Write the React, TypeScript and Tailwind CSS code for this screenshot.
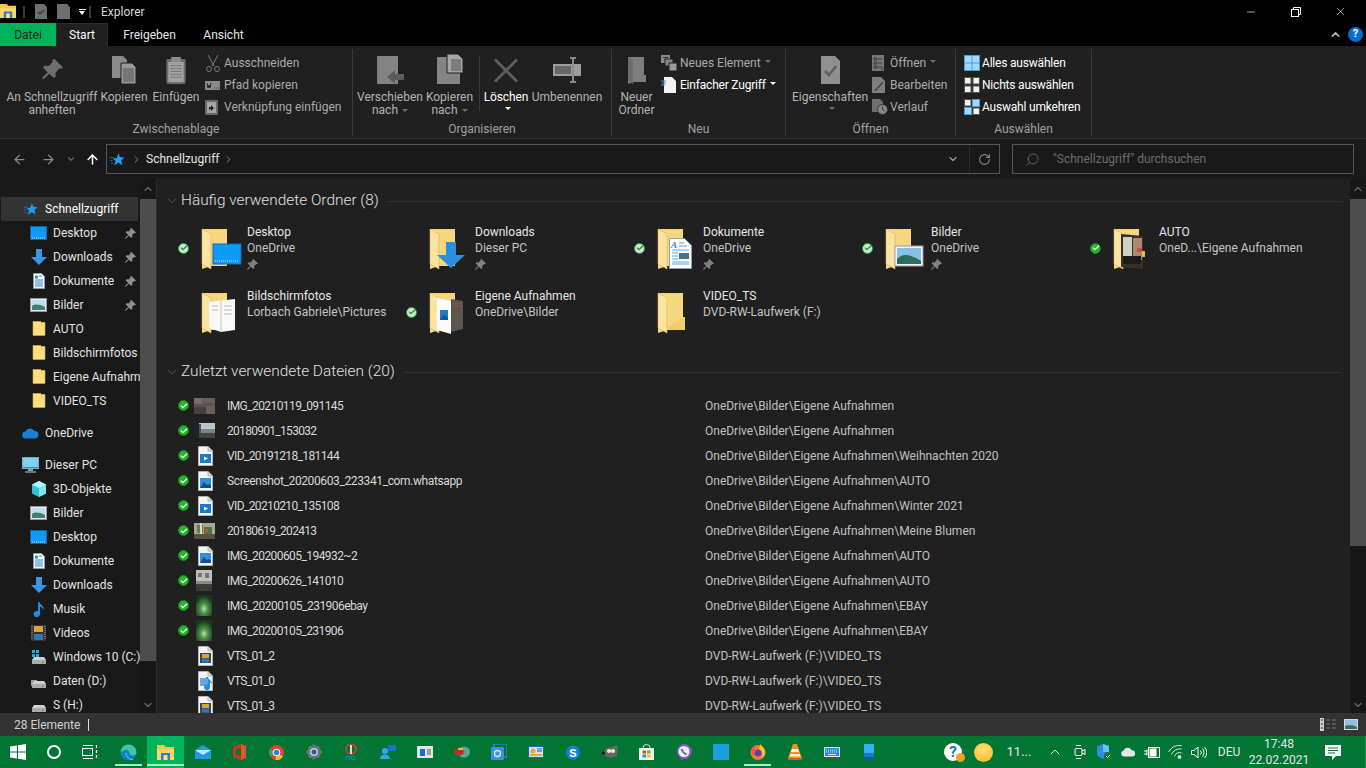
import React from "react";
import { ChevronUp, ChevronDown, ChevronRight, ArrowLeft, ArrowRight, ArrowUp, RotateCw, Search, Minus, X, Check } from "lucide-react";

const F = "font-['Roboto','Liberation_Sans',sans-serif]";

function Star({ s = 16 }: { s?: number }) {
  return <svg width={s} height={s} viewBox="0 0 16 16"><path d="M9 1l1.6 4.4L15.5 6l-3.6 3 1.1 5-4.2-2.7L4.5 14.500l1.400-5L3 7l4.400-.6z" fill="#1e9fee" /><path d="M0 6h4M0 9h2.500M1 12h2.500" stroke="#1e6fb0" strokeWidth="1" /></svg>;
}
function FolderSmall() {
  return <svg width="14" height="16" viewBox="0 0 14 16"><path d="M1 0.500h8v1h4v13H1z" fill="#fcdf80" stroke="#d9b44f" strokeWidth=".6" /><path d="M9 1v3h4" fill="none" stroke="#e8c862" strokeWidth=".6" /></svg>;
}
function DesktopSmall() {
  return <svg width="17" height="14" viewBox="0 0 17 14"><rect x=".5" y=".5" width="16" height="13" fill="#0f9bf5" stroke="#0a64b0" /><path d="M2 12h13" stroke="#bfe4ff" strokeDasharray="1 1" /></svg>;
}
function DownSmall() {
  return <svg width="16" height="16" viewBox="0 0 16 16"><path d="M5 0h6v8h5l-8 8-8-8h5z" fill="#3a96e6" /></svg>;
}
function DocSmall() {
  return <svg width="12" height="16" viewBox="0 0 12 16"><path d="M.5.500h8l3 3v12H.5z" fill="#f5f5f5" stroke="#9a9a9a" /><path d="M2 7h8M2 9h8M2 11h8M2 13h8M6 3h3" stroke="#2f8fd8" /><rect x="2" y="2.500" width="3" height="3" fill="#2f8fd8" /></svg>;
}
function PicSmall() {
  return <svg width="17" height="14" viewBox="0 0 17 14"><rect x=".5" y=".5" width="16" height="13" fill="#e8e8e8" stroke="#999" /><rect x="2" y="2" width="13" height="10" fill="#bcdcf0" /><path d="M2 8c3-2 6-2 13 1v3H2z" fill="#3f7f6c" /></svg>;
}
function Cloud() {
  return <svg width="17" height="12" viewBox="0 0 17 12"><path d="M4 11.500a3.500 3.500 0 0 1-.5-7A5 5 0 0 1 12.500 4a3.700 3.700 0 0 1 .5 7.500z" fill="#1a7fd6" /></svg>;
}
function Monitor() {
  return <svg width="17" height="16" viewBox="0 0 17 16"><rect x=".5" y=".5" width="16" height="11" fill="#7fd0f7" stroke="#8aa" /><path d="M1 10.500h15" stroke="#2f8fd0" /><path d="M6 12h5v2H6z" fill="#99a" /><path d="M3 15h11" stroke="#ccc" /></svg>;
}
function Cube() {
  return <svg width="16" height="16" viewBox="0 0 16 16"><path d="M8 0l7 3.500v9L8 16l-7-3.500v-9z" fill="#35c3dc" /><path d="M8 7l7-3.500v9L8 16z" fill="#7fe3ef" /><path d="M8 0l7 3.500L8 7 1 3.500z" fill="#b6f2f7" /></svg>;
}
function Music() {
  return <svg width="12" height="17" viewBox="0 0 12 17"><path d="M5 1h1.500c.5 3 5 3.500 4 8-.5-2-2-3-3.500-3.500V13a3.200 3 0 1 1-2-2.700z" fill="#1d8fe8" /></svg>;
}
function Film() {
  return <svg width="15" height="16" viewBox="0 0 15 16"><rect width="15" height="16" fill="#333" /><rect x="3" y="1" width="9" height="6" fill="#d9a33c" /><rect x="3" y="9" width="9" height="6" fill="#2e78b8" /><path d="M1 1v14M14 1v14" stroke="#aaa" strokeDasharray="1 1" /></svg>;
}
function Drive({ win, pic }: { win?: boolean; pic?: boolean }) {
  return (
    <svg width="16" height="16" viewBox="0 0 16 16">
      {win && <g fill="#27a5e8"><rect x="1" y="1" width="3" height="3" /><rect x="5" y="1" width="3" height="3" /><rect x="1" y="5" width="3" height="3" /><rect x="5" y="5" width="3" height="3" /></g>}
      {pic && <g><rect x="0" y="7" width="6" height="6" fill="#8aa" /><rect x="2" y="8" width="4" height="3" fill="#6a7" /></g>}
      <path d="M3 8h10l2 3v4H1v-4z" fill="#d0d0d0" /><rect x="1" y="11" width="14" height="4" fill="#aaa" /><rect x="11" y="12.500" width="2" height="1.500" fill="#27c93f" />
    </svg>
  );
}
function MiniPin({ c = "#8a8f94" }: { c?: string }) {
  return <svg width="11" height="11" viewBox="0 0 11 11"><path d="M6.500 0L11 4.500l-1 .8-.7-.4-2.100 2.200.1 2-1 .9L3.800 7.700.8 10.800 0 10l3.100-3L.600 4.300l.9-1 2 .1 2.200-2.100-.4-.7z" fill={c} /></svg>;
}
function Tick({ pale }: { pale?: boolean }) {
  return (
    <span className={`flex h-[11px] w-[11px] items-center justify-center rounded-full border ${pale ? "border-[#1f9e3a] bg-[#cfe6d2]" : "border-[#14861c] bg-[#27b52c]"}`}>
      <Check size={8} strokeWidth={3.500} color={pale ? "#1b7f34" : "#ffffff"} />
    </span>
  );
}

function BigFolder({ children, plain }: { children?: React.ReactNode; plain?: boolean }) {
  return (
    <svg width="44" height="44" viewBox="0 0 44 44">
      <path d="M3 3h25v37H12l-9 3z" fill="#f6d67f" />
      <path d="M3 3l9 5v35l-9-5z" fill="#fbe49f" />
      <path d="M3 3l9 5v35l-9-5z" fill="none" stroke="#d8b45c" strokeWidth=".6" />
      {plain && <path d="M28 27h2v13H12v-2z" fill="#f0cc6c" />}
      {children}
    </svg>
  );
}

function FolderDesktop() {
  return <BigFolder><rect x="14" y="18" width="28" height="20" fill="#0f9bf5" stroke="#0b6ab8" /><path d="M16 35h24" stroke="#cfeaff" strokeDasharray="1 1" /></BigFolder>;
}
function FolderDown() {
  return <BigFolder><path d="M19 16h10v13h9L24 42 10 29h9z" fill="#2e8fe0" /></BigFolder>;
}
function FolderDocs() {
  return <BigFolder><path d="M14.500 12.500h15l7 7v23h-22z" fill="#fbfbfb" stroke="#9aa0a6" /><text x="16" y="22" fontSize="9" fontStyle="italic" fontWeight="700" fill="#2b83d8" fontFamily="Liberation Serif, serif">A</text><path d="M24 17h5M24 20h8M17 24h17M17 27h6M17 30h6M17 33h6M17 36h17M17 38h17" stroke="#5aa8e0" /><rect x="24" y="27" width="10" height="6" fill="#47718a" /></BigFolder>;
}
function FolderPics() {
  return <BigFolder><rect x="12" y="20" width="28" height="20" fill="#f2f2f2" stroke="#a0a0a0" /><rect x="14" y="22" width="24" height="16" fill="#89bfe6" /><path d="M14 33c6-6 12-5 24 2v3H14z" fill="#2c6b60" /></BigFolder>;
}
function FolderAuto() {
  return <BigFolder><path d="M10 8l22 2v33l-22-2z" fill="#3a3028" /><rect x="12" y="11" width="9" height="24" fill="#cfcfc8" /><rect x="22" y="12" width="9" height="22" fill="#a88b6c" /><rect x="12" y="30" width="18" height="8" fill="#1c1c1c" /><rect x="26" y="22" width="5" height="4" fill="#c94f3a" /><rect x="31" y="25" width="3" height="6" fill="#e8bc40" /></BigFolder>;
}
function FolderShots() {
  return <BigFolder><path d="M10 12l26-3v31l-14 2-12-4z" fill="#f8f8f8" /><path d="M22 11v31" stroke="#c5c5c5" /><path d="M13 16h6M13 20h6M25 16h8M25 20h8M25 24h8" stroke="#bbb" /></BigFolder>;
}
function FolderOwn() {
  return <BigFolder><path d="M10 8l14 3v33l-14-4z" fill="#fbfbfb" /><path d="M24 9l12 2v28l-12 3z" fill="#5d5550" /><rect x="13" y="20" width="8" height="10" fill="#1d7cc9" /><path d="M13 30l4-5 4 3v2z" fill="#0f5a97" /><path d="M26 13h8M26 16h8" stroke="#8b5a4a" /></BigFolder>;
}

function PageIcon({ children }: { children: React.ReactNode }) {
  return (
    <svg width="15" height="20" viewBox="0 0 15 20">
      <path d="M.5.500h9.500l4.500 4.500v14.500H.5z" fill="#f4f4f4" stroke="#b5b5b5" />
      <path d="M10 .5v4.500h4.500" fill="#d8d8d8" stroke="#b5b5b5" />
      {children}
    </svg>
  );
}
const VideoPage = () => <PageIcon><rect x="2" y="8" width="11" height="9" fill="#1a78c8" /><path d="M6 10.500l4 2-4 2z" fill="#ffffff" /></PageIcon>;
const ImagePage = () => <PageIcon><rect x="2" y="7" width="11" height="10" fill="#2f8fdb" /><path d="M2 17l4-6 3 3 2-1 2 2v2z" fill="#0f4f96" /></PageIcon>;
const FilmPage = () => <PageIcon><rect x="2" y="7" width="11" height="10" fill="#3f454b" /><rect x="4" y="8" width="7" height="4" fill="#d9a33c" /><rect x="4" y="12.500" width="7" height="4" fill="#2e78b8" /></PageIcon>;
const MediaPage = () => <PageIcon><rect x="2" y="7" width="8" height="8" fill="#6aa4d8" /><path d="M8 6h2c0 3 4 3 4 7l-2-2v5a3 3 0 1 1-2-2.600V9z" fill="#1d8fe8" /></PageIcon>;

const T1 = () => <svg width="21" height="16" viewBox="0 0 21 16"><rect width="21" height="16" fill="#5c524e" /><rect width="8" height="6" fill="#7b6d66" /><rect x="8" width="13" height="5" fill="#66605c" /><rect y="9" width="12" height="7" fill="#4a4040" /><rect x="12" y="8" width="9" height="8" fill="#6c5f5a" /></svg>;
const T2 = () => <svg width="21" height="15" viewBox="0 0 21 15"><rect width="21" height="15" fill="#b9c6cc" /><rect y="6" width="21" height="4" fill="#78868a" /><rect y="10" width="21" height="5" fill="#3d4649" /><rect width="5" height="15" fill="#1f2628" /><rect x="5" y="1" width="2" height="9" fill="#4a5558" /></svg>;
const T3 = () => <svg width="21" height="16" viewBox="0 0 21 16"><rect width="21" height="16" fill="#a8a697" /><rect x="3" y="2" width="6" height="8" fill="#6a7a4a" /><rect x="10" y="4" width="8" height="9" fill="#54703d" /><rect x="11" y="6" width="3" height="3" fill="#c05a3a" /><rect y="11" width="21" height="5" fill="#5a5040" /><rect x="6" y="0" width="2" height="11" fill="#d8d8ce" /></svg>;
const T4 = () => <svg width="16" height="21" viewBox="0 0 16 21"><rect width="16" height="21" fill="#c0bfb7" /><rect x="2" y="3" width="4" height="4" fill="#77756e" /><rect x="9" y="3" width="4" height="5" fill="#77756e" /><rect y="11" width="16" height="3" fill="#8c8b84" /><rect y="14" width="16" height="7" fill="#3b3b37" /></svg>;
const Green = () => (
  <svg width="16" height="21" viewBox="0 0 16 21">
    <defs><radialGradient id="gg" cx=".5" cy=".65" r=".6"><stop offset="0" stopColor="#b9e0b0" /><stop offset=".4" stopColor="#4f8f4a" /><stop offset="1" stopColor="#163a1c" /></radialGradient></defs>
    <rect width="16" height="21" fill="url(#gg)" />
  </svg>
);

/* ribbon icons */
const IconPin = () => <svg width="21" height="21" viewBox="0 0 22 22" className="mb-[4px]"><path d="M13 0l9 9-2 1.600-1.500-.8-4.400 4.500.3 4-2 1.700L7.500 15.500 1.500 21.500 0 20l6-6L1 9l1.800-2 4 .3 4.500-4.500-.8-1.500z" fill="#6f6f6f" /></svg>;
const IconCopy = () => <svg width="24" height="28" viewBox="0 0 24 28"><path d="M0 0h11l4 4v18H0z" fill="#8b8b8b" /><path d="M9 7h11l4 4v17H9z" fill="#9a9a9a" stroke="#202020" /><path d="M11 13h11M11 15h11M11 17h11M11 19h11M11 21h11M11 23h11M11 25h11" stroke="#555" /></svg>;
const IconPaste = () => <svg width="20" height="28" viewBox="0 0 20 29"><rect y="3" width="20" height="26" rx="1.500" fill="#6a6a6a" /><rect x="2" y="6" width="16" height="21" fill="#a3a3a3" /><rect x="5" y="1" width="10" height="5" fill="#8c8c8c" /><path d="M4 10h12M4 13h12M4 16h12M4 19h12M4 22h12" stroke="#777" /></svg>;
const IconScissors = () => <svg width="16" height="17" viewBox="0 0 16 17" fill="none" stroke="#7a7a7a"><path d="M3 0l6 11M13 0L7 11" /><circle cx="4" cy="14" r="2.500" /><circle cx="12" cy="14" r="2.500" /></svg>;
const IconPath = () => <svg width="15" height="9" viewBox="0 0 15 9"><rect width="15" height="9" fill="#8a8a8a" /><path d="M2 2l1 5 1-3 1 3 1-5M9 7h.8M11 7h.8M13 7h.8" stroke="#222" fill="none" /></svg>;
const IconLink = () => <svg width="13" height="16" viewBox="0 0 13 16"><rect y="1" width="13" height="15" rx="1" fill="#6a6a6a" /><rect x="2" y="3" width="9" height="11" fill="#a5a5a5" /><path d="M4 12V8h2V6l3 3-3 3v-2H5z" fill="#222" /></svg>;
const IconMove = () => <svg width="27" height="28" viewBox="0 0 27 28"><path d="M0 0h21v28H0z" fill="#848484" /><path d="M0 0l0 28" stroke="#6f6f6f" /><path d="M10 21l8-7v4h9v6h-9v4z" fill="#5c5c5c" /></svg>;
const IconCopyTo = () => <svg width="26" height="30" viewBox="0 0 26 30"><path d="M0 3h23v27H0z" fill="#848484" /><path d="M10 0h11l5 5v14H10z" fill="#a7a7a7" stroke="#202020" /><path d="M14 6h10M14 8h10M14 10h10M14 12h10M14 14h10M14 16h10" stroke="#555" /></svg>;
const IconDelete = () => <svg width="24" height="25" viewBox="0 0 24 24" className="mb-[1px]"><path d="M2 0l10 10L22 0l2 2-10 10 10 10-2 2-10-10L2 24l-2-2 10-10L0 2z" fill="#5e5e5e" /></svg>;
const IconRename = () => <svg width="28" height="26" viewBox="0 0 28 26" className="mb-[1px]"><rect y="7" width="28" height="12" fill="#9c9c9c" /><rect x="2" y="9" width="16" height="8" fill="#666" /><path d="M17 1h6M20 1v24M17 25h6" stroke="#8a8a8a" strokeWidth="2" fill="none" /></svg>;
const IconNewFolder = () => <svg width="18" height="28" viewBox="0 0 18 28"><path d="M0 1h16v18h2v7H6l-6 2z" fill="#7e7e7e" /><path d="M0 1l5 3v24l-5-3z" fill="#6d6d6d" /></svg>;
const IconNewItem = () => <svg width="16" height="16" viewBox="0 0 16 16"><rect width="9" height="8" fill="#8a8a8a" /><rect x="2" y="2" width="5" height="1" fill="#333" /><rect x="4" y="4" width="8" height="7" fill="#8a8a8a" stroke="#202020" /><rect x="8" y="8" width="8" height="8" fill="#9a9a9a" stroke="#202020" /></svg>;
const IconEasy = () => <svg width="15" height="16" viewBox="0 0 15 16"><path d="M3 0h8l4 4v12H3z" fill="#f2f2f2" /><path d="M0 4h5M1 6h4M0 8h4" stroke="#3a96e6" /></svg>;
const IconProps = () => <svg width="19" height="28" viewBox="0 0 19 28"><path d="M0 0h14l5 5v23H0z" fill="#8f8f8f" /><path d="M4 15l4 4 7-9" stroke="#5f5f5f" strokeWidth="2.500" fill="none" /></svg>;
const IconOpen = () => <svg width="14" height="16" viewBox="0 0 14 16"><rect width="12" height="16" fill="#777" /><path d="M2 3h3v2H2zM2 7h3v2H2zM2 11h3v2H2zM6 4h4M6 8h4M6 12h4" stroke="#3a3a3a" fill="none" /><path d="M9 11l4 3-4 2z" fill="#555" /></svg>;
const IconEdit = () => <svg width="14" height="16" viewBox="0 0 14 16"><path d="M0 0h9l4 4v12H0z" fill="#7e7e7e" /><path d="M3 14l8-9" stroke="#444" strokeWidth="1.500" /></svg>;
const IconHist = () => <svg width="16" height="16" viewBox="0 0 16 16"><path d="M0 0h8l3 3v10H0z" fill="#707070" /><circle cx="10.500" cy="10.500" r="5" fill="#888" stroke="#333" /><path d="M10.500 7.500v3l2 1" stroke="#333" fill="none" /></svg>;
const IconAll = () => <svg width="16" height="16" viewBox="0 0 16 16"><rect width="16" height="16" fill="#3e9fe8" /><rect x="1" y="1" width="6.500" height="6.500" fill="#a4d7fa" /><rect x="8.500" y="1" width="6.500" height="6.500" fill="#a4d7fa" /><rect x="1" y="8.500" width="6.500" height="6.500" fill="#a4d7fa" /><rect x="8.500" y="8.500" width="6.500" height="6.500" fill="#a4d7fa" /></svg>;
const IconNone = () => <svg width="16" height="16" viewBox="0 0 16 16"><rect x=".5" y=".5" width="6.500" height="6.500" fill="#f0f0f0" stroke="#555" /><rect x="9" y=".5" width="6.500" height="6.500" fill="#f0f0f0" stroke="#555" /><rect x=".5" y="9" width="6.500" height="6.500" fill="#f0f0f0" stroke="#555" /><rect x="9" y="9" width="6.500" height="6.500" fill="#f0f0f0" stroke="#555" /></svg>;
const IconInvert = () => <svg width="16" height="16" viewBox="0 0 16 16"><rect x=".5" y=".5" width="6.500" height="6.500" fill="#f0f0f0" stroke="#555" /><rect x="8" width="8" height="8" fill="#3e9fe8" /><rect x="9" y="1" width="6" height="6" fill="#a4d7fa" /><rect y="8" width="8" height="8" fill="#3e9fe8" /><rect x="1" y="9" width="6" height="6" fill="#a4d7fa" /><rect x="9" y="9" width="6.500" height="6.500" fill="#f0f0f0" stroke="#555" /></svg>;

const Caret = ({ white }: { white?: boolean }) => <span className={`ml-1 inline-block h-0 w-0 translate-y-[-2px] border-x-[3.5px] border-t-[3.5px] border-x-transparent ${white ? "border-t-white" : "border-t-[#6f6f6f]"}`} />;

function Large({ w, icon, lines, bright, caret, caretOwn }: { w: string; icon: React.ReactNode; lines: React.ReactNode[]; bright?: boolean; caret?: boolean; caretOwn?: "white" | "gray" }) {
  return (
    <div className={`flex shrink-0 flex-col items-center ${w}`}>
      <div className="flex h-[42px] items-end justify-center pb-[7px]">{icon}</div>
      <div className={`flex flex-col items-center text-xs leading-[13px] ${bright ? "tracking-[-0.1px] text-white" : "text-[#b4b4b4]"}`}>
        {lines.map((l, i) => <div key={i} className="whitespace-nowrap">{l}{caret && i === lines.length - 1 && <Caret />}</div>)}
        {caretOwn && <div className="flex h-[13px] items-center"><Caret white={caretOwn === "white"} /></div>}
      </div>
    </div>
  );
}
function Small({ icon, label, iconW, bright, caret }: { icon: React.ReactNode; label: string; iconW: string; bright?: boolean; caret?: "white" | "gray" }) {
  return (
    <div className={`flex h-[22px] items-center whitespace-nowrap text-xs ${bright ? "tracking-[-0.2px] text-white" : "text-[#ababab]"}`}>
      <span className={`flex shrink-0 items-center ${iconW}`}>{icon}</span>
      <span>{label}</span>
      {caret && <Caret white={caret === "white"} />}
    </div>
  );
}
function Group({ w, label, children }: { w: string; label: string; children: React.ReactNode }) {
  return (
    <div className={`flex shrink-0 flex-col border-r border-[#3a3a3a] ${w}`}>
      <div className="flex h-[72px] items-start">{children}</div>
      <div className="mt-[1px] flex h-[14px] items-center justify-center text-xs text-[#a0a0a0]">{label}</div>
    </div>
  );
}

function NavRow({ icon, label, pin, top, sel }: { icon: React.ReactNode; label: string; pin?: boolean; top?: boolean; sel?: boolean }) {
  return (
    <div className={`flex h-6 shrink-0 items-center text-xs ${top ? "pl-[24px]" : "pl-[32px]"} ${sel ? "ml-[1px] mr-[2px] bg-[#333333] text-white" : "text-[#e2e2e2]"}`}>
      <span className={`flex w-[21px] shrink-0 items-center justify-center ${sel ? "-ml-[1px]" : ""}`}>{icon}</span>
      <span className="min-w-0 flex-1 overflow-hidden whitespace-nowrap">{label}</span>
      {pin && <span className="mr-[4px] shrink-0"><MiniPin /></span>}
    </div>
  );
}

const iconWrapNav = (n: React.ReactNode) => <span className="-ml-[8px] flex w-[21px] justify-center">{n}</span>;

function FolderCell({ icon, name, sub, tick, pin }: { icon: React.ReactNode; name: string; sub: string; tick?: "pale" | "solid"; pin?: boolean }) {
  return (
    <div className="flex h-16 items-center">
      <span className="flex w-[21px] shrink-0 items-center justify-center">{tick && <Tick pale={tick === "pale"} />}</span>
      <span className="flex w-[53px] shrink-0 items-center justify-start pl-[5px]">{icon}</span>
      <div className="flex h-12 flex-col whitespace-nowrap text-xs leading-4 text-[#e6e6e6]">
        <span>{name}</span>
        <span className="text-[#c4c4c4]">{sub}</span>
        <span className="flex h-4 items-center">{pin && <MiniPin c="#7c8287" />}</span>
      </div>
    </div>
  );
}

function FileRow({ icon, name, path, tick, ts }: { icon: React.ReactNode; name: string; path: string; tick?: boolean; ts: string }) {
  return (
    <div className="flex h-[25px] shrink-0 items-center whitespace-nowrap text-xs text-[#d8d8d8]">
      <span className="flex w-[21px] shrink-0 items-center justify-center">{tick && <Tick />}</span>
      <span className="flex w-[33px] shrink-0 items-center justify-start">{icon}</span>
      <span className={`w-[478px] shrink-0 ${ts}`}>{name}</span>
      <span className="text-[#c0c0c0]">{path}</span>
    </div>
  );
}

function SectionHead({ label, mb }: { label: string; mb: string }) {
  return (
    <div className={`-ml-[9px] flex h-5 items-center ${mb}`}>
      <span className="flex w-[15px] justify-center"><ChevronDown size={14} strokeWidth={1} color="#777" /></span>
      <span className="whitespace-nowrap pl-[2px] text-[15.4px] font-light text-[#e2e2e2]">{label}</span>
      <span className="ml-2 h-px flex-1 bg-[#2e2e2e]" />
    </div>
  );
}

function ScrollBar({ w, thumb }: { w: string; thumb: string }) {
  return (
    <div className={`flex shrink-0 flex-col items-center bg-[#171717] ${w}`}>
      <div className="flex h-5 items-center"><ChevronUp size={12} strokeWidth={2.500} color="#666" /></div>
      <div className={`w-full bg-[#4d4d4d] ${thumb}`} />
      <div className="flex-1" />
      <div className="flex h-[17px] items-center"><ChevronDown size={12} strokeWidth={2.500} color="#666" /></div>
    </div>
  );
}

/* taskbar */
const TB = ({ children, active, line }: { children: React.ReactNode; active?: boolean; line?: boolean }) => (
  <div className={`relative flex h-8 w-[37px] shrink-0 items-center justify-center ${active ? "bg-[#00b25a]" : ""}`}>
    {children}
    {line && <span className={`absolute bottom-[2px] h-[2px] bg-[#9ff5c8] ${active ? "inset-x-0" : "inset-x-[5px]"}`} />}
  </div>
);
const Tray = ({ w, children }: { w: string; children: React.ReactNode }) => <div className={`flex h-8 shrink-0 items-center justify-center ${w}`}>{children}</div>;

const Explorer = ({ s = 17 }: { s?: number }) => <svg width={s} height={s} viewBox="0 0 17 17"><path d="M0 1h7l2 2h8v13H0z" fill="#f6c648" /><rect y="5" width="17" height="11" fill="#fcd765" /><rect x="4" y="9" width="9" height="7" fill="#3a78c8" /><rect x="6.500" y="11" width="4" height="5" fill="#fce38a" /></svg>;

export default function App() {
  return (
    <div className={`flex h-screen w-[1366px] flex-col overflow-hidden bg-black ${F}`}>
      {/* title bar */}
      <div className="flex h-[23px] shrink-0 items-center bg-black text-xs text-[#d8d8d8]">
        <span className="-mt-[1px] flex w-[23px] items-center pr-[6px]"><Explorer s={16} /></span>
        <span className="h-[12px] w-[2px] bg-[#3a3a3a]" />
        <span className="ml-[10px] flex w-[12px] items-center"><svg width="12" height="15" viewBox="0 0 12 15"><path d="M0 0h9l3 3v12H0z" fill="#6f6f6f" /><path d="M3 8l2 2 4-4" stroke="#333" strokeWidth="1.200" fill="none" /></svg></span>
        <span className="ml-[10px] flex w-[13px] items-center"><svg width="13" height="15" viewBox="0 0 13 15"><path d="M0 0h10l3 3v12H0z" fill="#6f6f6f" /></svg></span>
        <span className="ml-[8px] flex w-[8px] flex-col items-center"><span className="mb-[1px] h-px w-[7px] bg-white" /><span className="h-0 w-0 border-x-[3.500px] border-t-[4px] border-x-transparent border-t-white" /></span>
        <span className="ml-[3px] h-[12px] w-[2px] bg-[#3a3a3a]" />
        <span className="ml-[10px] text-[#d8d8d8]">Explorer</span>
        <div className="ml-auto flex h-full items-center pr-[2px]">
          <span className="flex w-[45px] justify-center"><Minus size={12} strokeWidth={1.300} color="#fff" /></span>
          <span className="flex w-[45px] justify-center">
            <svg width="10" height="10" viewBox="0 0 10 10" fill="none" stroke="#fff"><rect x=".5" y="2.500" width="7" height="7" /><path d="M2.500 2.500v-2h7v7h-2" /></svg>
          </span>
          <span className="flex w-[46px] justify-center pr-[2px]"><X size={13} strokeWidth={1.100} color="#fff" /></span>
        </div>
      </div>
      {/* tabs */}
      <div className="flex h-[23px] shrink-0 items-stretch text-xs text-[#e6e6e6]">
        <div className="flex w-14 items-center justify-center bg-[#00b25a] text-[#0f2a1a]">Datei</div>
        <div className="flex w-[52px] items-center justify-center border-x border-t border-[#2d2d2d] bg-[#202020] text-white">Start</div>
        <div className="flex w-[82px] items-center justify-center pl-[1px]">Freigeben</div>
        <div className="flex w-[66px] items-center justify-center pl-[1px]">Ansicht</div>
        <div className="ml-auto flex items-center">
          <ChevronUp size={13} strokeWidth={3} color="#b5b5b5" />
          <span className="ml-[6px] mr-[3px] flex h-[15px] w-[15px] items-center justify-center rounded-full bg-[#0a6ed0] text-[11px] font-bold text-white">?</span>
        </div>
      </div>
      {/* ribbon */}
      <div className="flex h-[93px] shrink-0 items-start border-b border-[#2f2f2f] bg-[#202020] pt-[3px]">
        <Group w="w-[353px]" label="Zwischenablage">
          <div className="w-[6px]" />
          <Large w="w-[92px]" icon={<IconPin />} lines={["An Schnellzugriff", "anheften"]} />
          <Large w="w-[52px]" icon={<IconCopy />} lines={["Kopieren"]} />
          <Large w="w-[52px]" icon={<IconPaste />} lines={["Einfügen"]} />
          <div className="ml-[3px] flex flex-col pt-[3px]">
            <Small iconW="w-[19px]" icon={<IconScissors />} label="Ausschneiden" />
            <Small iconW="w-[19px]" icon={<IconPath />} label="Pfad kopieren" />
            <Small iconW="w-[19px]" icon={<IconLink />} label="Verknüpfung einfügen" />
          </div>
        </Group>
        <Group w="w-[259px]" label="Organisieren">
          <div className="w-[6px]" />
          <Large w="w-[62px]" icon={<IconMove />} lines={["Verschieben", "nach"]} caret />
          <Large w="w-[57px]" icon={<IconCopyTo />} lines={["Kopieren", "nach"]} caret />
          <div className="ml-[1px] mt-[7px] h-[55px] w-px bg-[#3a3a3a]" />
          <Large w="w-[52px]" icon={<IconDelete />} lines={["Löschen"]} bright caretOwn="white" />
          <Large w="w-[70px]" icon={<IconRename />} lines={["Umbenennen"]} />
        </Group>
        <Group w="w-[174px]" label="Neu">
          <div className="w-[1px]" />
          <Large w="w-[47px]" icon={<IconNewFolder />} lines={["Neuer", "Ordner"]} />
          <div className="flex flex-col pl-[1px] pt-[3px]">
            <Small iconW="w-[19px]" icon={<IconNewItem />} label="Neues Element" caret="gray" />
            <Small iconW="w-[19px]" icon={<IconEasy />} label="Einfacher Zugriff" bright caret="white" />
          </div>
        </Group>
        <Group w="w-[170px]" label="Öffnen">
          <div className="w-[6px]" />
          <Large w="w-[76px]" icon={<IconProps />} lines={["Eigenschaften"]} caretOwn="gray" />
          <div className="ml-[4px] flex flex-col pt-[3px]">
            <Small iconW="w-[18px]" icon={<IconOpen />} label="Öffnen" caret="gray" />
            <Small iconW="w-[18px]" icon={<IconEdit />} label="Bearbeiten" />
            <Small iconW="w-[18px]" icon={<IconHist />} label="Verlauf" />
          </div>
        </Group>
        <Group w="w-[136px]" label="Auswählen">
          <div className="ml-[8px] flex flex-col pt-[3px]">
            <Small iconW="w-[18px]" icon={<IconAll />} label="Alles auswählen" bright />
            <Small iconW="w-[18px]" icon={<IconNone />} label="Nichts auswählen" bright />
            <Small iconW="w-[18px]" icon={<IconInvert />} label="Auswahl umkehren" bright />
          </div>
        </Group>
      </div>
      {/* nav bar */}
      <div className="flex h-[40px] shrink-0 items-center bg-[#191919] text-xs">
        <div className="flex w-[106px] shrink-0 items-center">
          <span className="flex w-[38px] justify-center pl-[1px]"><ArrowLeft size={15} strokeWidth={2} color="#8a8a8a" /></span>
          <span className="-ml-[1px] flex w-[22px] justify-center"><ArrowRight size={15} strokeWidth={2} color="#8a8a8a" /></span>
          <span className="flex w-[24px] justify-center"><ChevronDown size={10} strokeWidth={3} color="#666" /></span>
          <span className="flex w-[18px] justify-center"><ArrowUp size={15} strokeWidth={2.500} color="#fff" /></span>
        </div>
        <div className="flex h-[30px] w-[894px] items-center border border-[#555] text-[#e6e6e6]">
          <span className="ml-[2px] flex w-[16px] justify-center"><Star s={15} /></span>
          <ChevronRight size={11} strokeWidth={2} color="#8a8a8a" className="ml-[6px]" />
          <span className="ml-[4px]">Schnellzugriff</span>
          <ChevronRight size={11} strokeWidth={2} color="#8a8a8a" className="ml-[4px]" />
          <span className="ml-auto flex w-[32px] justify-center"><ChevronDown size={12} strokeWidth={2.500} color="#999" /></span>
          <span className="flex h-full w-[30px] items-center justify-center border-l border-[#2c2c2c]"><RotateCw size={13} strokeWidth={2} color="#8a8a8a" /></span>
        </div>
        <div className="ml-[12px] flex h-[30px] w-[342px] items-center border border-[#555] text-[#6e6e6e]">
          <span className="ml-[12px] flex w-[15px] justify-center"><Search size={15} strokeWidth={1.200} color="#777" className="scale-x-[-1]" /></span>
          <span className="ml-[13px]">"Schnellzugriff" durchsuchen</span>
        </div>
      </div>
      {/* body */}
      <div className="flex min-h-0 flex-1">
        <div className="flex w-[140px] shrink-0 flex-col overflow-hidden bg-[#191919] pt-[18px]">
          <NavRow sel top icon={iconWrapNav(<Star s={14} />)} label="Schnellzugriff" />
          <NavRow icon={iconWrapNav(<DesktopSmall />)} label="Desktop" pin />
          <NavRow icon={iconWrapNav(<DownSmall />)} label="Downloads" pin />
          <NavRow icon={iconWrapNav(<DocSmall />)} label="Dokumente" pin />
          <NavRow icon={iconWrapNav(<PicSmall />)} label="Bilder" pin />
          <NavRow icon={iconWrapNav(<FolderSmall />)} label="AUTO" />
          <NavRow icon={iconWrapNav(<FolderSmall />)} label="Bildschirmfotos" />
          <NavRow icon={iconWrapNav(<FolderSmall />)} label="Eigene Aufnahmen" />
          <NavRow icon={iconWrapNav(<FolderSmall />)} label="VIDEO_TS" />
          <div className="h-2 shrink-0" />
          <NavRow top icon={iconWrapNav(<Cloud />)} label="OneDrive" />
          <div className="h-2 shrink-0" />
          <NavRow top icon={iconWrapNav(<Monitor />)} label="Dieser PC" />
          <NavRow icon={iconWrapNav(<Cube />)} label="3D-Objekte" />
          <NavRow icon={iconWrapNav(<PicSmall />)} label="Bilder" />
          <NavRow icon={iconWrapNav(<DesktopSmall />)} label="Desktop" />
          <NavRow icon={iconWrapNav(<DocSmall />)} label="Dokumente" />
          <NavRow icon={iconWrapNav(<DownSmall />)} label="Downloads" />
          <NavRow icon={iconWrapNav(<Music />)} label="Musik" />
          <NavRow icon={iconWrapNav(<Film />)} label="Videos" />
          <NavRow icon={iconWrapNav(<Drive win />)} label="Windows 10 (C:)" />
          <NavRow icon={iconWrapNav(<Drive pic />)} label="Daten (D:)" />
          <NavRow icon={iconWrapNav(<Drive />)} label="S (H:)" />
        </div>
        <ScrollBar w="w-[17px] border-r border-[#2b2b2b]" thumb="h-[462px]" />
        <div className="flex min-w-0 flex-1 flex-col overflow-hidden bg-[#202020] pl-[16px] pr-[8px] pt-[12px]">
          <SectionHead label="Häufig verwendete Ordner (8)" mb="mb-[5px]" />
          <div className="grid grid-cols-[repeat(5,228px)] grid-rows-[64px_64px]">
            <FolderCell tick="pale" icon={<FolderDesktop />} name="Desktop" sub="OneDrive" pin />
            <FolderCell icon={<FolderDown />} name="Downloads" sub="Dieser PC" pin />
            <FolderCell tick="pale" icon={<FolderDocs />} name="Dokumente" sub="OneDrive" pin />
            <FolderCell tick="pale" icon={<FolderPics />} name="Bilder" sub="OneDrive" pin />
            <FolderCell tick="solid" icon={<FolderAuto />} name="AUTO" sub="OneD...\Eigene Aufnahmen" />
            <FolderCell icon={<FolderShots />} name="Bildschirmfotos" sub="Lorbach Gabriele\Pictures" />
            <FolderCell tick="pale" icon={<FolderOwn />} name="Eigene Aufnahmen" sub="OneDrive\Bilder" />
            <FolderCell icon={<BigFolder plain />} name="VIDEO_TS" sub="DVD-RW-Laufwerk (F:)" />
          </div>
          <div className="mt-[18px]">
            <SectionHead label="Zuletzt verwendete Dateien (20)" mb="mb-[11px]" />
          </div>
          <FileRow tick ts="tracking-[-0.58px]" icon={<T1 />} name="IMG_20210119_091145" path="OneDrive\Bilder\Eigene Aufnahmen" />
          <FileRow tick ts="tracking-[-0.7px]" icon={<T2 />} name="20180901_153032" path="OneDrive\Bilder\Eigene Aufnahmen" />
          <FileRow tick ts="tracking-[-0.63px]" icon={<span className="pl-[4px]"><VideoPage /></span>} name="VID_20191218_181144" path="OneDrive\Bilder\Eigene Aufnahmen\Weihnachten 2020" />
          <FileRow tick ts="tracking-[-0.38px]" icon={<span className="pl-[4px]"><ImagePage /></span>} name="Screenshot_20200603_223341_com.whatsapp" path="OneDrive\Bilder\Eigene Aufnahmen\AUTO" />
          <FileRow tick ts="tracking-[-0.63px]" icon={<span className="pl-[4px]"><VideoPage /></span>} name="VID_20210210_135108" path="OneDrive\Bilder\Eigene Aufnahmen\Winter 2021" />
          <FileRow tick ts="tracking-[-0.7px]" icon={<T3 />} name="20180619_202413" path="OneDrive\Bilder\Eigene Aufnahmen\Meine Blumen" />
          <FileRow tick ts="tracking-[-0.57px]" icon={<span className="pl-[4px]"><ImagePage /></span>} name="IMG_20200605_194932~2" path="OneDrive\Bilder\Eigene Aufnahmen\AUTO" />
          <FileRow tick ts="tracking-[-0.58px]" icon={<span className="pl-[2px]"><T4 /></span>} name="IMG_20200626_141010" path="OneDrive\Bilder\Eigene Aufnahmen\AUTO" />
          <FileRow tick ts="tracking-[-0.52px]" icon={<span className="pl-[2px]"><Green /></span>} name="IMG_20200105_231906ebay" path="OneDrive\Bilder\Eigene Aufnahmen\EBAY" />
          <FileRow tick ts="tracking-[-0.58px]" icon={<span className="pl-[2px]"><Green /></span>} name="IMG_20200105_231906" path="OneDrive\Bilder\Eigene Aufnahmen\EBAY" />
          <FileRow ts="tracking-[-0.7px]" icon={<span className="pl-[4px]"><FilmPage /></span>} name="VTS_01_2" path="DVD-RW-Laufwerk (F:)\VIDEO_TS" />
          <FileRow ts="tracking-[-0.7px]" icon={<span className="pl-[4px]"><MediaPage /></span>} name="VTS_01_0" path="DVD-RW-Laufwerk (F:)\VIDEO_TS" />
          <FileRow ts="tracking-[-0.7px]" icon={<span className="pl-[4px]"><FilmPage /></span>} name="VTS_01_3" path="DVD-RW-Laufwerk (F:)\VIDEO_TS" />
        </div>
        <ScrollBar w="w-[16px]" thumb="h-[347px]" />
      </div>
      {/* status bar */}
      <div className="flex h-[23px] shrink-0 items-center bg-[#333333] pl-[14px] text-xs text-[#d0d0d0]">
        <span>28 Elemente</span>
        <span className="ml-[8px] h-[12px] w-px bg-[#dddddd]" />
        <div className="ml-auto flex items-center">
          <svg width="16" height="13" viewBox="0 0 16 13"><rect width="4" height="13" fill="#cfcfcf" /><path d="M1 2h2M1 6h2M1 10h2" stroke="#333" /><path d="M6 2h4M12 2h4M6 6h4M12 6h4M6 10h4M12 10h4" stroke="#777" /></svg>
          <svg width="14" height="11" viewBox="0 0 14 11" className="ml-[8px] mr-[8px]"><rect width="14" height="11" fill="#d8d8d8" /><rect x="1" y="1" width="12" height="9" fill="#8fc0dd" /><path d="M1 7c4-2 8-1 12 1v2H1z" fill="#3b6b60" /></svg>
        </div>
      </div>
      {/* taskbar */}
      <div className="flex h-8 shrink-0 items-center bg-[#017534] text-white">
        <Tray w="w-9"><svg width="16" height="16" viewBox="0 0 16 16" fill="#fff"><path d="M0 2.500l7-1v6H0zM8 1.300L16 0v7.500H8zM0 8.500h7v6l-7-1zM8 8.500h8V16l-8-1.200z" /></svg></Tray>
        <Tray w="w-9"><span className="h-[14px] w-[14px] rounded-full border-2 border-white" /></Tray>
        <Tray w="w-9"><svg width="16" height="14" viewBox="0 0 16 14" fill="none" stroke="#fff"><rect x=".5" y="3.500" width="10" height="7" /><path d="M1 .5h10M1 13.500h10M14.500 0v3M14.500 5v3M14.500 10v3" strokeWidth="1.200" /></svg></Tray>
        <div className="w-[2px]" />
        <TB line><svg width="17" height="17" viewBox="0 0 17 17"><circle cx="8.500" cy="8.500" r="8" fill="#0f7fc8" /><path d="M.5 8.500a8 8 0 0 1 16 0c0 2-2 3-4 3-2.500 0-3-1.500-3-2.500 0-1.500-1-3-3-3-3 0-5 2-6 2.500z" fill="#3fc8a0" /><path d="M6 9c0 4 4 7 7 6.500" stroke="#6fd8f0" fill="none" /></svg></TB>
        <TB active line><Explorer /></TB>
        <TB><svg width="16" height="14" viewBox="0 0 16 14"><path d="M0 5l8-5 8 5v9H0z" fill="#1e9be0" /><path d="M0 5l8 5 8-5" fill="#bfe6fa" /></svg></TB>
        <TB><svg width="13" height="16" viewBox="0 0 13 16"><path d="M0 3l8-3v16l-8-3z" fill="#c8381f" /><path d="M8 0l5 2v12l-5 2z" fill="#e8552a" /><rect x="3" y="5" width="5" height="6" fill="#017534" /></svg></TB>
        <TB><svg width="15" height="15" viewBox="0 0 16 16"><circle cx="8" cy="8" r="8" fill="#e34133" /><path d="M8 8L15 12A8 8 0 0 1 7 16z" fill="#f5bd19" /><path d="M8 8L1 12A8 8 0 0 1 1 4z" fill="#33a852" /><circle cx="8" cy="8" r="4" fill="#fff" /><circle cx="8" cy="8" r="3" fill="#3b78e7" /></svg></TB>
        <TB><svg width="16" height="16" viewBox="0 0 16 16"><path d="M8 0l2 2h3l1 3 2 3-2 3-1 3h-3l-2 2-2-2H3l-1-3-2-3 2-3 1-3h3z" fill="#6d7377" /><circle cx="8" cy="8" r="4" fill="#c9ccce" /><circle cx="8" cy="8" r="2.500" fill="#1c5fb4" /></svg></TB>
        <TB><svg width="14" height="17" viewBox="0 0 14 17" fill="none"><circle cx="7" cy="5" r="5" stroke="#e03c2a" strokeWidth="1.500" /><path d="M7 1v9" stroke="#ddd" strokeWidth="2" /><circle cx="4" cy="14" r="2" stroke="#2b7bd8" /><circle cx="9" cy="14" r="2" stroke="#2b7bd8" /></svg></TB>
        <TB><svg width="16" height="14" viewBox="0 0 16 14"><rect x="8" width="8" height="6" fill="#1e6fd0" /><circle cx="5" cy="6" r="3" fill="#2ea8f0" /><path d="M0 14c0-6 10-6 10 0z" fill="#2ea8f0" /></svg></TB>
        <TB><svg width="16" height="12" viewBox="0 0 16 12"><rect width="16" height="12" fill="#e4e4e4" /><rect x="3" y="3" width="5" height="7" fill="#1672c8" /><path d="M10 4h4M10 6h4M10 8h4" stroke="#555" /></svg></TB>
        <TB><svg width="16" height="12" viewBox="0 0 16 12"><ellipse cx="10" cy="6" rx="6" ry="5.500" fill="#57a69a" /><ellipse cx="5" cy="6" rx="5" ry="3.500" fill="#bd2f2a" /><path d="M4 2h5v2H4z" fill="#e8b638" /></svg></TB>
        <TB><svg width="16" height="16" viewBox="0 0 16 16"><rect x="3" y="0" width="13" height="13" fill="none" stroke="#3d90e8" /><rect y="3" width="13" height="13" rx="1" fill="#3d90e8" /><circle cx="6.500" cy="9.500" r="3" fill="none" stroke="#d5e9ff" strokeWidth="1.300" /></svg></TB>
        <TB><svg width="16" height="12" viewBox="0 0 16 12"><rect width="16" height="12" fill="#1c5fb4" /><rect x="1" y="1" width="14" height="10" fill="#cfe3f2" /><circle cx="5" cy="5" r="2.500" fill="#e8a33a" /><path d="M9 3h5M9 5h5" stroke="#1c5fb4" /><rect x="2" y="8" width="12" height="2" fill="#e8a33a" /></svg></TB>
        <TB><svg width="14" height="15" viewBox="0 0 14 15"><circle cx="7" cy="7.500" r="7" fill="#0a84cf" /><text x="7" y="11.500" textAnchor="middle" fontSize="11" fontWeight="700" fill="#fff" fontFamily="Liberation Sans, sans-serif">S</text></svg></TB>
        <TB><svg width="16" height="14" viewBox="0 0 16 14"><path d="M2 6c0-3 10-5 14-6l-1 10c-2 3-10 4-13-1z" fill="#6b665c" /><circle cx="7" cy="6" r="2" fill="#eee" /><circle cx="11" cy="6" r="2" fill="#eee" /><circle cx="1.500" cy="8" r="1.500" fill="#111" /></svg></TB>
        <TB><svg width="15" height="16" viewBox="0 0 15 16"><path d="M0 4h15v12H0z" fill="#f5f5f5" /><path d="M4 4a3.500 3.500 0 0 1 7 0" stroke="#ddd" fill="none" /><rect x="3.500" y="6.500" width="3.500" height="3" fill="#e34133" /><rect x="8" y="6.500" width="3.500" height="3" fill="#7ab800" /><rect x="3.500" y="10.500" width="3.500" height="3" fill="#1d8fe8" /><rect x="8" y="10.500" width="3.500" height="3" fill="#f5bd19" /></svg></TB>
        <TB><svg width="16" height="16" viewBox="0 0 16 16"><path d="M8 0a8 7.500 0 0 1 0 15l-3 1v-2A8 7.500 0 0 1 8 0z" fill="#7f5bc4" /><circle cx="8" cy="7.500" r="5.500" fill="#f2f2f2" /><path d="M5.500 5c1 3 2.500 4.500 5 5.500" stroke="#7f5bc4" strokeWidth="2" fill="none" /></svg></TB>
        <TB><span className="h-4 w-4 bg-[#1c9fe0]" /></TB>
        <TB line><svg width="16" height="16" viewBox="0 0 16 16"><circle cx="8" cy="8.500" r="7.500" fill="#f77f2a" /><path d="M11 0c0 3 4 4 4 8a7 7 0 0 1-3 6c2-3 0-8-3-8 0-3 1-5 2-6z" fill="#fcc52d" /><circle cx="8" cy="9" r="3.500" fill="#5f3fb8" /><path d="M1 6c1-2 3-3 5-3-2 2-1 3 1 3-3 1-3 4-1 6-3 0-5-3-5-6z" fill="#ff4a5c" /></svg></TB>
        <TB><svg width="14" height="16" viewBox="0 0 14 16"><path d="M5 0h4l5 14H0z" fill="#f58f1b" /><path d="M4 5h6l1 3H3z" fill="#f5f5f5" /><path d="M2.500 10h9l1 2.500h-11z" fill="#f5f5f5" /><rect y="14" width="14" height="2" fill="#e05a12" /></svg></TB>
        <TB><svg width="16" height="10" viewBox="0 0 16 10"><rect width="16" height="10" fill="#d8e6f0" /><rect x="1" y="1" width="14" height="8" fill="#1f8fe0" /><path d="M2 3h12M2 5h12" stroke="#d8e6f0" strokeDasharray="1 1" /><path d="M4 7.500h8" stroke="#d8e6f0" /></svg></TB>
        <TB><svg width="10" height="16" viewBox="0 0 10 16"><rect width="10" height="16" fill="#2fb2ee" /><rect y="9" width="10" height="4" fill="#1a78c4" /><rect y="13" width="10" height="3" fill="#0f5aa0" /></svg></TB>
        <div className="flex-1" />
        <Tray w="w-[26px]"><span className="relative flex h-[18px] w-[18px] items-center justify-center rounded-full bg-white text-[15px] font-bold text-[#1273c7]">?<span className="absolute -bottom-[1px] -right-[3px] h-[9px] w-[9px] rounded-full bg-[#f2a32b]" /></span></Tray>
        <Tray w="w-[34px]"><span className="h-[19px] w-[19px] rounded-full bg-[radial-gradient(circle_at_50%_35%,#ffe37a,#fdb114)]" /></Tray>
        <Tray w="w-[42px]"><span className="pr-[4px] text-[13px] text-[#e6e6e6]">11...</span></Tray>
        <Tray w="w-[25px]"><ChevronUp size={16} strokeWidth={1.300} color="#fff" /></Tray>
        <Tray w="w-[25px]"><svg width="12" height="16" viewBox="0 0 12 16" fill="none" stroke="#fff"><rect x="1" y="4.500" width="7" height="7" rx="1" /><path d="M8 7l3-1.500v5L8 9M2 1.500h5M2 14.500h5" /></svg></Tray>
        <Tray w="w-[24px]"><svg width="15" height="16" viewBox="0 0 15 16"><path d="M0 2l6-2 6 2v7c0 3-3 5-6 6-3-1-6-3-6-6z" fill="#2a8fe0" /><path d="M6 0l6 2v6H6z" fill="#6dc0f2" /><circle cx="11" cy="12" r="4" fill="#0d7a2c" /><path d="M9 12l1.500 1.500L13 11" stroke="#fff" fill="none" /></svg></Tray>
        <Tray w="w-[23px]"><svg width="16" height="10" viewBox="0 0 17 11"><path d="M4 10.500a3.300 3.300 0 0 1-.5-6.500A5 5 0 0 1 12.500 3.500a3.500 3.500 0 0 1 .5 7z" fill="#e6e6e6" /></svg></Tray>
        <Tray w="w-[25px]"><svg width="16" height="11" viewBox="0 0 16 11" fill="none" stroke="#fff"><rect x="4.500" y=".5" width="11" height="10" /><rect x="6" y="2" width="6" height="7" fill="#fff" /><path d="M0 4h3M0 7h3M3 2.500v6" /></svg></Tray>
        <Tray w="w-[23px]"><svg width="15" height="14" viewBox="0 0 15 14" fill="none" stroke="#ddd"><path d="M.5 7a13 13 0 0 1 13-6.500M3.500 9.500a9 9 0 0 1 10-5.500M6.500 11.500a5 5 0 0 1 7-3.500" /><circle cx="11.500" cy="12" r="1.500" fill="#ddd" /></svg></Tray>
        <Tray w="w-[23px]"><svg width="16" height="13" viewBox="0 0 16 13" fill="none" stroke="#fff"><path d="M.5 4.500h2.500L7 1v11L3 8.500H.5zM9.500 4.500a3 3 0 0 1 0 4M11.500 2.500a6 6 0 0 1 0 8M13.500 1a8 8 0 0 1 0 11" /></svg></Tray>
        <Tray w="w-[38px]"><span className="text-xs text-[#e6e6e6]">DEU</span></Tray>
        <div className="flex h-8 w-[62px] shrink-0 flex-col items-center justify-center text-xs leading-[16px] text-[#e6e6e6]"><span>17:48</span><span>22.02.2021</span></div>
        <Tray w="w-[46px]"><svg width="16" height="15" viewBox="0 0 16 15"><path d="M0 0h16v11h-5l-4 4v-4H0z" fill="#fff" /><path d="M3 3h10M3 5.500h10M3 8h7" stroke="#017534" /></svg></Tray>
        <div className="h-full w-[10px] border-r border-[#2d9a5b]" />
      </div>
    </div>
  );
}
